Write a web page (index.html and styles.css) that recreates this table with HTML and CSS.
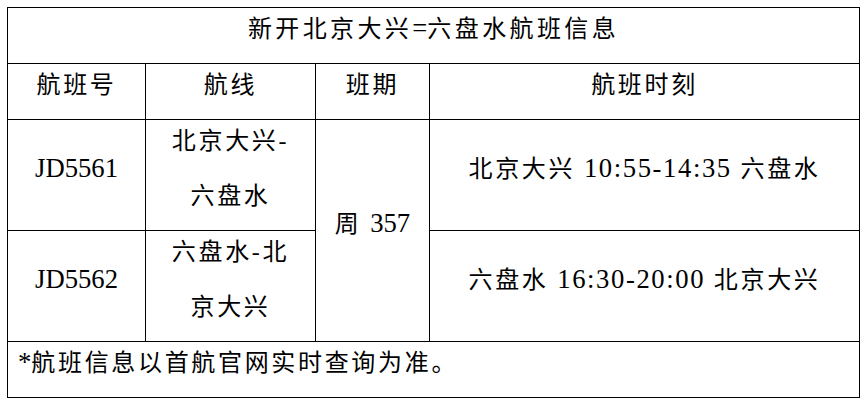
FILE: index.html
```html
<!DOCTYPE html>
<html lang="zh-CN">
<head>
<meta charset="utf-8">
<title>新开北京大兴=六盘水航班信息</title>
<link rel="stylesheet" href="styles.css">
</head>
<body>
<table class="flights">
  <colgroup>
    <col class="c1"><col class="c2"><col class="c3"><col class="c4">
  </colgroup>
  <tr class="r-title"><td colspan="4" class="title"><span class="tx">新开北京大兴<span class="lat">=</span>六盘水航班信息</span></td></tr>
  <tr class="r-head">
    <td><span class="tx">航班号</span></td>
    <td><span class="tx">航线</span></td>
    <td><span class="tx">班期</span></td>
    <td><span class="tx">航班时刻</span></td>
  </tr>
  <tr class="r-data">
    <td><span class="tx lat">JD5561</span></td>
    <td class="route"><span class="tx">北京大兴-六盘水</span></td>
    <td rowspan="2"><span class="tx">周 <span class="lat">357</span></span></td>
    <td><span class="tx">北京大兴 <span class="lat num">10:55-14:35</span> 六盘水</span></td>
  </tr>
  <tr class="r-data">
    <td><span class="tx lat">JD5562</span></td>
    <td class="route"><span class="tx">六盘水-北京大兴</span></td>
    <td><span class="tx">六盘水 <span class="lat num">16:30-20:00</span> 北京大兴</span></td>
  </tr>
  <tr class="r-foot"><td colspan="4" class="note"><span class="tx"><span class="lat">*</span>航班信息以首航官网实时查询为准。</span></td></tr>
</table>
</body>
</html>
```

FILE: styles.css
```css
html, body {
  margin: 0;
  padding: 0;
  background: #fff;
}

body {
  font-family: "Liberation Serif", "Noto Sans CJK SC", serif;
  font-size: 24px;
  letter-spacing: 2.67px;
  font-weight: 400;
  color: #000;
}

.flights {
  border-collapse: collapse;
  table-layout: fixed;
  width: 853px;
  margin: 7px 0 0 7px;
}

.c1 { width: 138px; }
.c2 { width: 170px; }
.c3 { width: 114px; }
.c4 { width: 430px; }

.flights td {
  border: 1px solid #000;
  padding: 0 4px;
  text-align: center;
  vertical-align: middle;
  line-height: 55px;
  white-space: normal;
}

.r-title td { height: 55px; }
.r-head td { height: 53px; }
.r-data td { height: 110px; }
.r-foot td { height: 54px; }

.flights td.title {
  letter-spacing: 3.4px;
}

.flights td.route {
  padding: 0 18px;
}

.flights td.note {
  text-align: left;
  padding-left: 10px;
}

.tx {
  line-height: 1;
  vertical-align: 6px;
}

.lat {
  font-family: "Liberation Serif", serif;
  font-size: 26.67px;
  letter-spacing: 0;
}

.num {
  letter-spacing: 1.6px;
}
```
